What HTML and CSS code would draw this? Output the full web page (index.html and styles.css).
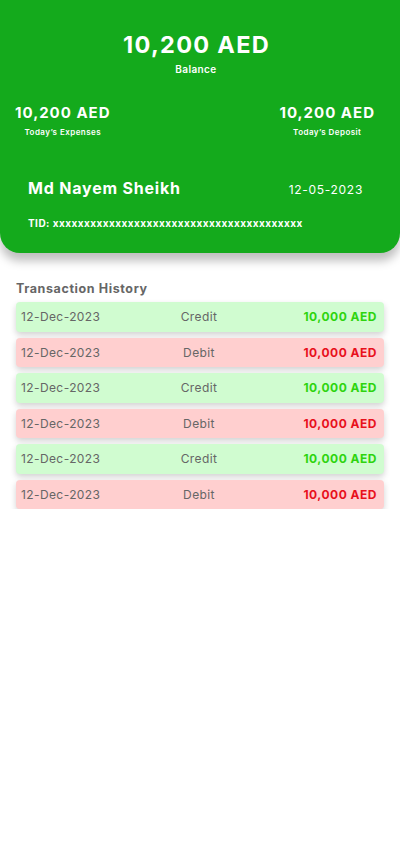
FILE: index.html
```html
<!DOCTYPE html>
<html>
<head>
<meta charset="utf-8">
<link rel="stylesheet" href="styles.css">
</head>
<body>
<header class="card">
  <div class="balance">
    <div class="balance-amount">10,200 AED</div>
    <div class="balance-label">Balance</div>
  </div>
  <div class="stats">
    <div class="stat">
      <div class="stat-amount">10,200 AED</div>
      <div class="stat-label">Today’s Expenses</div>
    </div>
    <div class="stat">
      <div class="stat-amount">10,200 AED</div>
      <div class="stat-label">Today’s Deposit</div>
    </div>
  </div>
  <div class="owner">
    <div class="owner-name">Md Nayem Sheikh</div>
    <div class="owner-date">12-05-2023</div>
  </div>
  <div class="tid">TID: xxxxxxxxxxxxxxxxxxxxxxxxxxxxxxxxxxxxxxxx</div>
</header>
<section class="history">
  <h2 class="history-title">Transaction History</h2>
  <div class="rows">
    <div class="row credit"><span class="date">12-Dec-2023</span><span class="type">Credit</span><span class="amount">10,000 AED</span></div>
    <div class="row debit"><span class="date">12-Dec-2023</span><span class="type">Debit</span><span class="amount">10,000 AED</span></div>
    <div class="row credit"><span class="date">12-Dec-2023</span><span class="type">Credit</span><span class="amount">10,000 AED</span></div>
    <div class="row debit"><span class="date">12-Dec-2023</span><span class="type">Debit</span><span class="amount">10,000 AED</span></div>
    <div class="row credit"><span class="date">12-Dec-2023</span><span class="type">Credit</span><span class="amount">10,000 AED</span></div>
    <div class="row debit"><span class="date">12-Dec-2023</span><span class="type">Debit</span><span class="amount">10,000 AED</span></div>
  </div>
</section>
</body>
</html>
```
FILE: styles.css
```css
* { box-sizing: border-box; margin: 0; padding: 0; }
body {
  font-family: Inter, "Liberation Sans", sans-serif;
  background: #fff;
  width: 400px;
}
.card {
  background: #14aa1c;
  color: #fff;
  height: 253px;
  border-radius: 0 0 20px 20px;
  box-shadow: 0 8px 10px rgba(0,0,0,0.25);
  padding: 30px 0 0;
}
.balance { text-align: center; }
.balance-amount {
  font-size: 23.5px;
  font-weight: 700;
  letter-spacing: 1.3px;
  line-height: 30px;
  padding-left: 1px;
  margin-left: -8px;
}
.balance-label {
  font-size: 10px;
  font-weight: 600;
  line-height: 12px;
  letter-spacing: 0.4px;
  margin-top: 3px;
  margin-left: -8px;
}
.stats {
  display: flex;
  justify-content: space-between;
  padding: 0 25px 0 15px;
  margin-top: 28px;
}
.stat { text-align: center; }
.stat-amount {
  font-size: 15px;
  font-weight: 700;
  letter-spacing: 1px;
  line-height: 20px;
}
.stat-label {
  font-size: 8px;
  font-weight: 600;
  letter-spacing: 0.45px;
  line-height: 10px;
  margin-top: 4px;
}
.owner {
  display: flex;
  justify-content: space-between;
  align-items: center;
  padding: 0 37px 0 28px;
  margin-top: 41px;
}
.owner-name {
  font-size: 16px;
  font-weight: 700;
  letter-spacing: 0.8px;
}
.owner-date {
  font-size: 12px;
  font-weight: 400;
  letter-spacing: 0.7px;
  margin-top: 2px;
}
.tid {
  font-size: 10px;
  font-weight: 700;
  padding-left: 28px;
  margin-top: 19px;
  letter-spacing: 0.45px;
}
.history { padding: 28px 16px 0; }
.history-title {
  font-size: 12.5px;
  font-weight: 700;
  color: #666;
  letter-spacing: 0.6px;
  line-height: 16px;
}
.rows {
  display: flex;
  flex-direction: column;
  gap: 6px;
  margin-top: 5px;
}
.row {
  display: grid;
  grid-template-columns: 1fr auto 1fr;
  align-items: center;
  height: 29.5px;
  padding: 0 7px 0 5px;
  border-radius: 4px;
  box-shadow: 0 3px 6px rgba(0,0,0,0.18);
  font-size: 12px;
  color: #666;
  letter-spacing: 0.4px;
}
.row.credit { background: #d0fcd0; }
.row.debit { background: #ffcfcf; }
.type { text-align: center; }
.amount { text-align: right; font-weight: 700; font-size: 12px; letter-spacing: 0.5px; }
.credit .amount { color: #2ed40f; }
.debit .amount { color: #e8101c; }
```
